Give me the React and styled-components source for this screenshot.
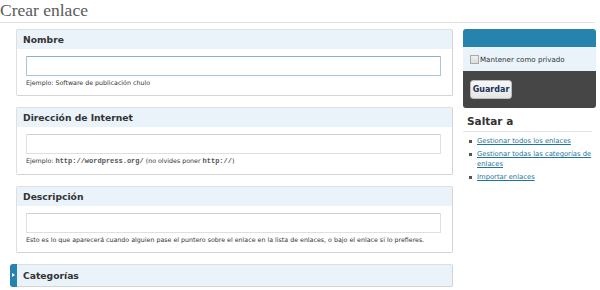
import React from "react";
import styled, { createGlobalStyle } from "styled-components";

const GlobalStyle = createGlobalStyle`
  body {
    margin: 0;
    background: #ffffff;
    font-family: "DejaVu Sans", Verdana, sans-serif;
    color: #333333;
  }
`;

const Page = styled.div`
  width: 600px;
  height: 290px;
  overflow: hidden;
`;

const Title = styled.h2`
  margin: 0 5px 0 0;
  height: 22px;
  border-bottom: 1px solid #e3e3e3;
  font-family: "Liberation Serif", "Times New Roman", serif;
  font-weight: normal;
  font-size: 17.5px;
  line-height: 21px;
  color: #5a5a5a;
`;

const Columns = styled.div`
  display: flex;
  align-items: flex-start;
  gap: 10px;
  padding: 6px 0 0 16px;
`;

const Main = styled.div`
  width: 437px;
  display: flex;
  flex-direction: column;
  gap: 11px;
`;

const Box = styled.div`
  position: relative;
  border: 1px solid #dfdfdf;
  border-right-color: #d4d4d4;
  border-bottom-color: #d4d4d4;
  border-radius: 2px;
  background: #ffffff;
`;

const BoxHeader = styled.h3`
  margin: 0;
  height: ${(p) => (p.$closed ? 21 : 19)}px;
  padding-left: 6px;
  background: #eaf2fa;
  font-size: 9.2px;
  font-weight: bold;
  line-height: ${(p) => (p.$closed ? 21 : 19)}px;
  color: #333333;
`;

const Tab = styled.span`
  position: absolute;
  left: -7px;
  top: -1px;
  bottom: -1px;
  width: 7px;
  border-radius: 3px 0 0 3px;
  background: #2583ad;
  &::after {
    content: "";
    position: absolute;
    left: 2px;
    top: 9px;
    border-left: 3px solid #ffffff;
    border-top: 2.5px solid transparent;
    border-bottom: 2.5px solid transparent;
  }
`;

const BoxBody = styled.div`
  padding: 7px 11px 8px 9px;
`;

const Field = styled.div`
  height: 18px;
  border: 1px solid ${(p) => (p.$focused ? "#a9c5df" : "#dfdfdf")};
  border-top-color: ${(p) => (p.$focused ? "#8cb0d2" : "#d1d1d1")};
  border-radius: 1px;
  background: #ffffff;
`;

const Hint = styled.p`
  margin: 2px 0 0;
  font-size: 6.3px;
  line-height: 9px;
  color: #333333;
`;

const Code = styled.code`
  font-family: "Liberation Mono", "Courier New", monospace;
  font-size: 7px;
  font-weight: bold;
  color: #555555;
`;

const Side = styled.div`
  width: 133px;
`;

const SubmitBox = styled.div`
  border-radius: 3px;
  overflow: hidden;
`;

const SubmitTop = styled.div`
  height: 18px;
  background: #2583ad;
`;

const PrivateRow = styled.label`
  display: flex;
  align-items: center;
  gap: 1px;
  height: 24px;
  padding-left: 7px;
  background: #eaf2fa;
  font-size: 7.1px;
  color: #333333;
`;

const Check = styled.span`
  width: 7px;
  height: 7px;
  border: 1px solid #aaaaaa;
  background: linear-gradient(#f0f0f0, #dcdcdc);
`;

const Actions = styled.div`
  display: flex;
  align-items: flex-start;
  height: 37px;
  padding: 9px 0 0 7px;
  box-sizing: border-box;
  background: #464646;
`;

const SaveButton = styled.button`
  width: 42px;
  height: 19px;
  padding: 0;
  border: 1px solid #bbbbbb;
  border-radius: 3px;
  background: linear-gradient(#f7f7f7, #e6e6e6);
  font-family: "DejaVu Sans", Verdana, sans-serif;
  font-size: 8px;
  font-weight: bold;
  color: #21325a;
`;

const SideTitle = styled.h3`
  margin: 6px 4px 0 0;
  padding: 0 0 3px 4px;
  border-bottom: 1px solid #e3e3e3;
  font-size: 10.5px;
  font-weight: bold;
  line-height: 14px;
  color: #333333;
`;

const LinkList = styled.ul`
  margin: 4px 0 0;
  padding: 0 0 0 14px;
  list-style: none;
  display: flex;
  flex-direction: column;
  gap: 3px;
`;

const LinkItem = styled.li`
  position: relative;
  font-size: 6.8px;
  line-height: 10px;
  &::before {
    content: "";
    position: absolute;
    left: -8px;
    top: 4px;
    width: 3px;
    height: 3px;
    background: #555555;
  }
`;

const Link = styled.a`
  color: #21759b;
  text-decoration: underline;
`;

const sections = [
  {
    title: "Nombre",
    focused: true,
    hint: <>Ejemplo: Software de publicación chulo</>,
  },
  {
    title: "Dirección de Internet",
    hint: (
      <>
        Ejemplo: <Code>http://wordpress.org/</Code> (no olvides poner <Code>http://</Code>)
      </>
    ),
  },
  {
    title: "Descripción",
    hint: (
      <>
        Esto es lo que aparecerá cuando alguien pase el puntero sobre el enlace en la lista de
        enlaces, o bajo el enlace si lo prefieres.
      </>
    ),
  },
];

const links = [
  "Gestionar todos los enlaces",
  "Gestionar todas las categorías de enlaces",
  "Importar enlaces",
];

export default function App() {
  return (
    <Page>
      <GlobalStyle />
      <Title>Crear enlace</Title>
      <Columns>
        <Main>
          {sections.map((s) => (
            <Box key={s.title}>
              <BoxHeader>{s.title}</BoxHeader>
              <BoxBody>
                <Field $focused={s.focused} />
                <Hint>{s.hint}</Hint>
              </BoxBody>
            </Box>
          ))}
          <Box>
            <Tab />
            <BoxHeader $closed>Categorías</BoxHeader>
          </Box>
        </Main>
        <Side>
          <SubmitBox>
            <SubmitTop />
            <PrivateRow>
              <Check />
              Mantener como privado
            </PrivateRow>
            <Actions>
              <SaveButton>Guardar</SaveButton>
            </Actions>
          </SubmitBox>
          <SideTitle>Saltar a</SideTitle>
          <LinkList>
            {links.map((l) => (
              <LinkItem key={l}>
                <Link href="#">{l}</Link>
              </LinkItem>
            ))}
          </LinkList>
        </Side>
      </Columns>
    </Page>
  );
}
